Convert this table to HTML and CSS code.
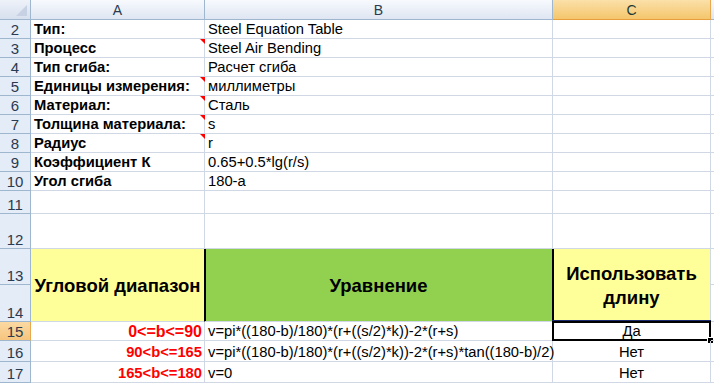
FILE: index.html
```html
<!DOCTYPE html>
<html lang="ru">
<head>
<meta charset="utf-8">
<title>Steel Equation Table</title>
<link rel="stylesheet" href="styles.css">
</head>
<body>
<div class="sheet">
  <div class="corner"><span class="tri"></span></div>
  <div class="colh">A</div>
  <div class="colh">B</div>
  <div class="colh colh-sel">C</div>
  <div class="colh colh-d"></div>

  <div class="rh r19">2</div><div class="c b">Тип:</div><div class="c">Steel Equation Table</div><div class="c"></div><div class="c"></div>
  <div class="rh r19">3</div><div class="c b cmt">Процесс</div><div class="c">Steel Air Bending</div><div class="c"></div><div class="c"></div>
  <div class="rh r19">4</div><div class="c b">Тип сгиба:</div><div class="c">Расчет сгиба</div><div class="c"></div><div class="c"></div>
  <div class="rh r19">5</div><div class="c b cmt">Единицы измерения:</div><div class="c">миллиметры</div><div class="c"></div><div class="c"></div>
  <div class="rh r19">6</div><div class="c b cmt">Материал:</div><div class="c">Сталь</div><div class="c"></div><div class="c"></div>
  <div class="rh r19">7</div><div class="c b cmt">Толщина материала:</div><div class="c">s</div><div class="c"></div><div class="c"></div>
  <div class="rh r19">8</div><div class="c b cmt">Радиус</div><div class="c">r</div><div class="c"></div><div class="c"></div>
  <div class="rh r19">9</div><div class="c b">Коэффициент К</div><div class="c">0.65+0.5*lg(r/s)</div><div class="c"></div><div class="c"></div>
  <div class="rh r19">10</div><div class="c b">Угол сгиба</div><div class="c">180-a</div><div class="c"></div><div class="c"></div>
  <div class="rh">11</div><div class="c"></div><div class="c"></div><div class="c"></div><div class="c"></div>
  <div class="rh">12</div><div class="c"></div><div class="c"></div><div class="c"></div><div class="c"></div>

  <div class="rh">13</div>
  <div class="hd hd-a">Угловой диапазон</div>
  <div class="hd hd-b">Уравнение</div>
  <div class="hd hd-c">Использовать<br>длину</div>
  <div class="c"></div>
  <div class="rh">14</div>
  <div class="c"></div>

  <div class="rh rh-sel">15</div><div class="c rng rng-lg">0&lt;=b&lt;=90</div><div class="c eq">v=pi*((180-b)/180)*(r+((s/2)*k))-2*(r+s)</div><div class="c ctr sel">Да<span class="selbox"></span><span class="handle"></span></div><div class="c"></div>
  <div class="rh">16</div><div class="c rng">90&lt;b&lt;=165</div><div class="c eq">v=pi*((180-b)/180)*(r+((s/2)*k))-2*(r+s)*tan((180-b)/2)</div><div class="c ctr">Нет</div><div class="c"></div>
  <div class="rh">17</div><div class="c rng">165&lt;b&lt;=180</div><div class="c eq">v=0</div><div class="c ctr">Нет</div><div class="c"></div>
</div>
</body>
</html>
```
FILE: styles.css
```css
html, body {
  margin: 0;
  padding: 0;
  background: #ffffff;
  overflow: hidden;
}

.sheet {
  display: grid;
  grid-template-columns: 31px 174px 348px 158px 20px;
  grid-template-rows: 20px repeat(9, 19px) 23px 35px 36px 37px 19px 21px 21px;
  width: 731px;
  font-family: "Liberation Sans", Arial, sans-serif;
  font-size: 14.75px;
  color: #000;
}

.sheet > div {
  box-sizing: border-box;
  min-width: 0;
  overflow: visible;
  white-space: nowrap;
}

.corner {
  position: relative;
  background: linear-gradient(#eef2f9, #d7e0ee);
  border-right: 1px solid #9eb6ce;
  border-bottom: 1px solid #9eb6ce;
}
.corner .tri {
  position: absolute;
  right: 3px;
  bottom: 3px;
  width: 0;
  height: 0;
  border-left: 11px solid transparent;
  border-bottom: 11px solid #c6d2e4;
}

.colh {
  display: flex;
  align-items: center;
  justify-content: center;
  background: linear-gradient(#f7f9fd, #dfe6f2);
  border-right: 1px solid #9eb6ce;
  border-bottom: 1px solid #9eb6ce;
  color: #2b3a4e;
  font-size: 14px;
  padding-top: 1px;
}
.colh-sel {
  background: linear-gradient(#fbe0a9, #f4c66c);
  border-bottom: 1px solid #e89e3b;
  border-right: 1px solid #e8a94c;
  color: #1c3a36;
}

.rh {
  display: flex;
  align-items: flex-end;
  justify-content: center;
  background: #e4ecf7;
  border-right: 1px solid #9eb6ce;
  border-bottom: 1px solid #9eb6ce;
  color: #2b3a4e;
  font-size: 15px;
  line-height: 17px;
}
.rh-sel {
  background: linear-gradient(#fbd9a3, #f6c57e);
  border-right: 1px solid #e8a94c;
}

.c {
  position: relative;
  display: flex;
  align-items: flex-end;
  padding: 0 3px;
  line-height: 17px;
  border-right: 1px solid #d0d7e5;
  border-bottom: 1px solid #d0d7e5;
}
.b { font-weight: bold; }

.cmt::after {
  content: "";
  position: absolute;
  top: 0;
  right: -1px;
  width: 0;
  height: 0;
  border-left: 5px solid transparent;
  border-top: 5px solid #ff0000;
}

.hd {
  grid-row: span 2;
  display: flex;
  align-items: center;
  justify-content: center;
  text-align: center;
  font-weight: bold;
  font-size: 18.5px;
  line-height: 24px;
  white-space: normal;
  border-bottom: 1px solid #d0d7e5;
}
.hd-a {
  background: #ffff99;
  border-right: 1px solid #000;
  padding-top: 1px;
}
.hd-b {
  background: #92d050;
  box-shadow: inset 1px 0 0 #000;
  border-right: 1px solid #000;
  padding-top: 2px;
}
.hd-c {
  background: #ffff99;
  box-shadow: inset 1px 0 0 #000;
  border-right: 1px solid #d0d7e5;
  padding-top: 1px;
}

.rng {
  justify-content: flex-end;
  color: #ff0000;
  font-weight: bold;
  padding-right: 2px;
}
.rng-lg {
  font-size: 16px;
}
.eq {
  padding-left: 3px;
}
.ctr {
  justify-content: center;
}

.selbox {
  position: absolute;
  left: -1px;
  top: -1px;
  right: -1px;
  bottom: -1px;
  border: 2px solid #000;
  box-shadow: 0 -1px 0 #1a2a6c;
  pointer-events: none;
}
.handle {
  position: absolute;
  right: -4px;
  bottom: -4px;
  width: 5px;
  height: 5px;
  background: #000;
  border: 1px solid #fff;
}
```
